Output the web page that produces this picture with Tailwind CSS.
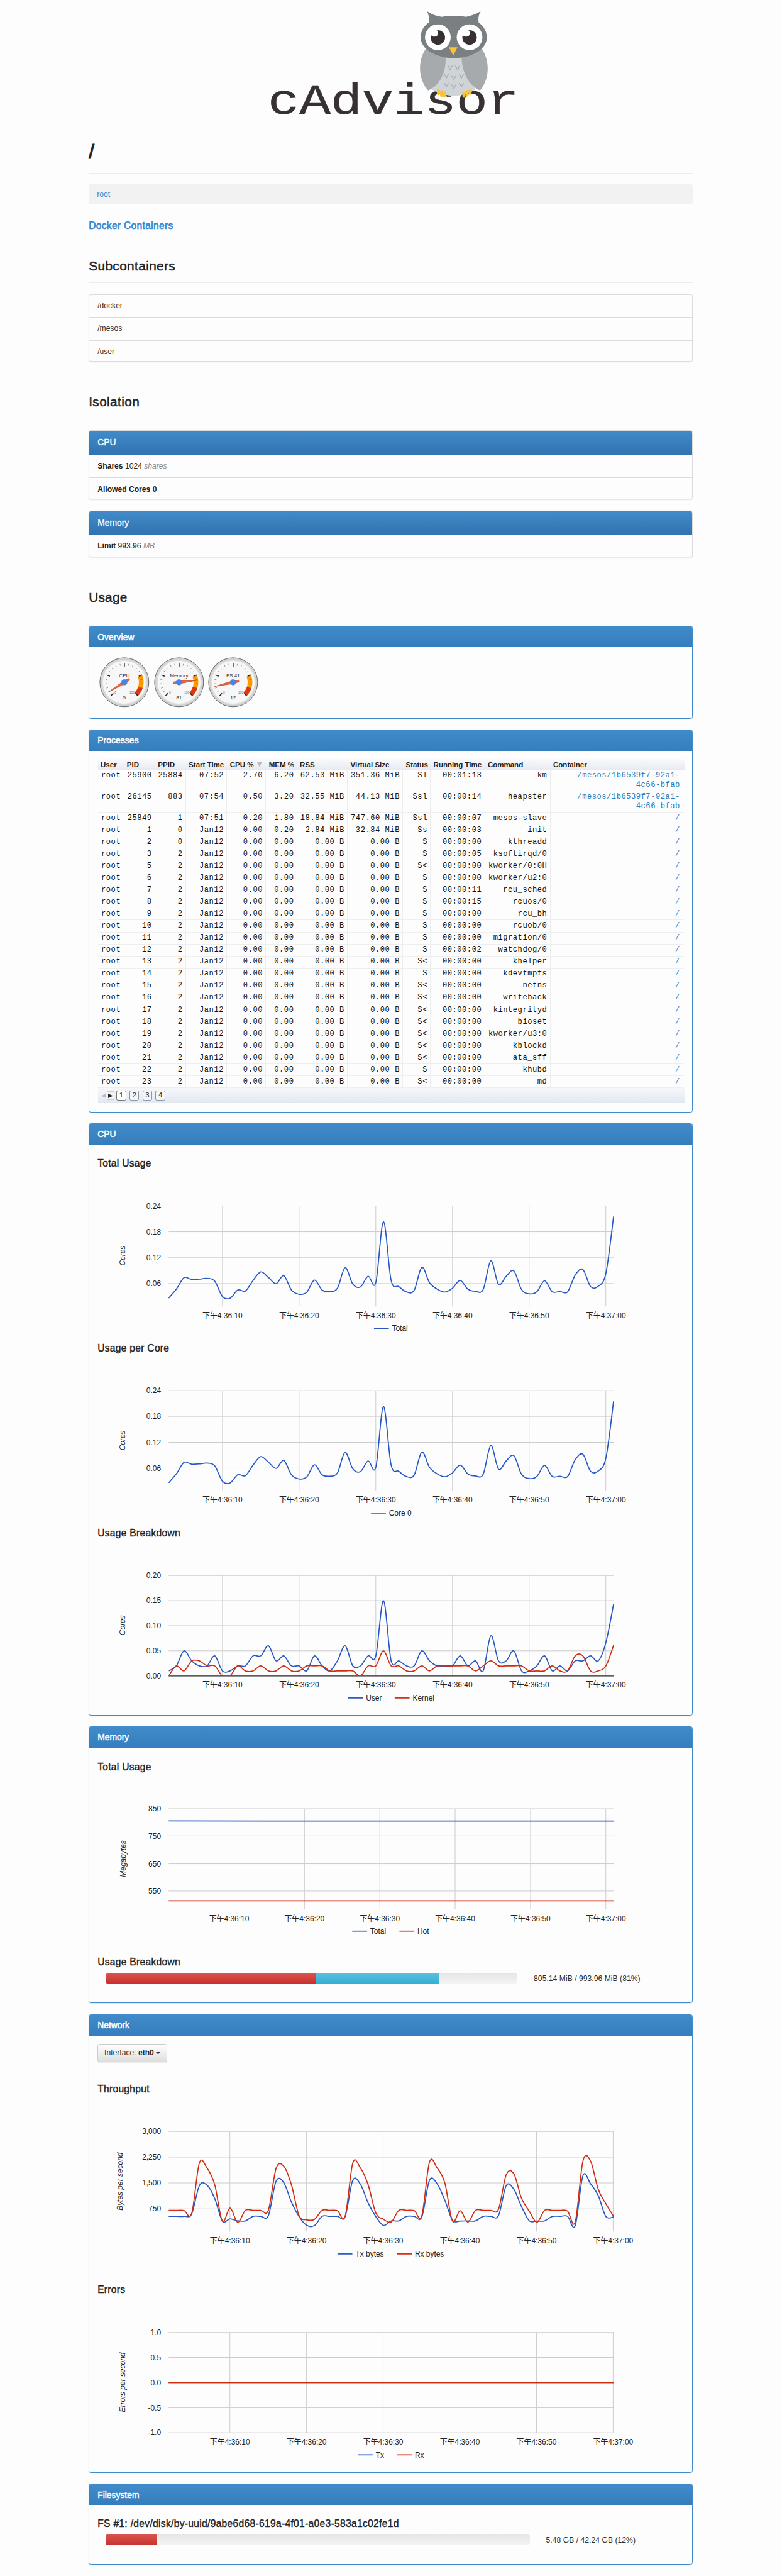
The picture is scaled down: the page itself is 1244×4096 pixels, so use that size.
<!DOCTYPE html>
<html lang="en">
<head>
<meta charset="utf-8">
<title>cAdvisor - /</title>
<script src="https://cdn.jsdelivr.net/npm/@tailwindcss/browser@4"></script>
</head>
<body class="bg-[#fdfdfd] overflow-x-hidden">
<div class="[zoom:0.8663] w-[1436px] h-[4728px] overflow-hidden pl-[163px] text-[14px] text-[#2b2b2b] font-['Liberation_Sans','Noto_Sans_CJK_SC',sans-serif]">
<main class="w-[1109px] flex flex-col">

  <svg class="block w-[1109px] h-[230px] overflow-visible" viewBox="163 0 1109 230">
    <text transform="translate(492.3 209) scale(1 .82)" font-family="Liberation Mono, monospace" font-size="96" fill="#373133" stroke="#373133" stroke-width=".8">cAdvisor</text>
    <g transform="translate(440 0) scale(.35714 .33333)">
      <path fill="#cfd4d7" d="M1052 300H1150C1155 400 1185 460 1215 490C1180 520 1130 527 1102 527C1060 527 1015 512 986 489C1040 450 1055 390 1052 300Z"/>
      <g fill="#a6aaad">
        <path d="M958 268C918 330 915 430 970 498C1030 470 1064 400 1060 310Z"/>
        <path d="M1246 268C1286 330 1290 430 1237 498C1178 470 1143 400 1142 310Z"/>
      </g>
      <path fill="#7a7f82" d="M965 62C985 76 1010 88 1040 93C1080 84 1122 84 1165 93C1192 86 1220 76 1240 62C1230 82 1226 100 1230 124C1258 145 1272 175 1272 208C1272 270 1195 320 1102 320C1010 320 932 270 932 208C932 172 945 145 974 124C976 100 973 82 965 62Z"/>
      <ellipse cx="1020" cy="205" rx="66" ry="71" fill="#fff"/><ellipse cx="1183" cy="205" rx="66" ry="71" fill="#fff"/>
      <ellipse cx="1020" cy="206" rx="37" ry="40" fill="#373133"/><ellipse cx="1183" cy="206" rx="37" ry="40" fill="#373133"/>
      <ellipse cx="1002" cy="182" rx="20" ry="20" fill="#fff"/><ellipse cx="1165" cy="182" rx="20" ry="20" fill="#fff"/>
      <path fill="#fcc22f" d="M1077 261H1121L1099 306Z"/>
      <path fill="none" stroke="#a6aaad" stroke-width="4" d="M1072 362l11 22l11-22M1110 362l11 22l11-22M1053 408l11 22l11-22M1091 418l11 20l11-20M1130 408l11 22l11-22M1053 457l11 20l11-20M1091 466l11 22l11-22M1130 457l11 20l11-20"/>
      <g stroke="#fcc22f" stroke-width="15" stroke-linecap="round">
        <path d="M1023 498v18M1039 504v22M1054 511v18M1154 511v20M1170 503v22M1186 497v18"/>
      </g>
    </g>
  </svg>
  <h1 class="h-[89px] pt-[29.5px] text-[36px] leading-[40px] text-[#222] border-b border-[#ececec] [-webkit-text-stroke:1.4px_#222]">/</h1>
  <nav class="mt-[19.5px] h-[36px] leading-[37px] px-[15px] rounded-[4px] bg-[#f2f2f2] text-[#2f86cf]">root</nav>
  <h4 class="h-[82.5px] leading-[81.5px] text-[18px] tracking-[0.36px] text-[#2f86cf] [-webkit-text-stroke:0.7px_#2f86cf]">Docker Containers</h4>
  <h2 class="h-[63px] leading-[63px] text-[24px] tracking-[0.45px] text-[#222] border-b border-[#ececec] [-webkit-text-stroke:0.6px_#222]">Subcontainers</h2>
  <ul class="mt-[20px] h-[123.5px] flex flex-col border border-[#dcdcdc] rounded-[4px] divide-y divide-[#dcdcdc] shadow-[0_1px_2px_rgba(0,0,0,0.1)]">
    <li class="flex-1 px-[15px] leading-[41px]">/docker</li>
    <li class="flex-1 px-[15px] leading-[41px]">/mesos</li>
    <li class="flex-1 px-[15px] leading-[41px]">/user</li>
  </ul>

  <h2 class="mt-[43px] h-[63px] leading-[63px] text-[24px] tracking-[0.45px] text-[#222] border-b border-[#ececec] [-webkit-text-stroke:0.6px_#222]">Isolation</h2>
  <section class="mt-[20.5px] h-[126.5px] flex flex-col rounded-[4px] border border-[#dcdcdc] overflow-hidden shadow-[0_1px_2px_rgba(0,0,0,0.1)] text-[#222]">
    <h3 class="-m-px mb-0 h-[44px] px-[16px] leading-[45px] text-[16px] text-white bg-linear-to-b from-[#428bca] to-[#3074b0] [-webkit-text-stroke:0.4px_#fff]">CPU</h3>
    <p class="flex-1 px-[15px] leading-[42px] border-b border-[#dcdcdc]"><b>Shares</b> 1024 <i class="text-[#888]">shares</i></p>
    <p class="flex-1 px-[15px] leading-[42px]"><b>Allowed Cores 0</b></p>
  </section>
  <section class="mt-[20.5px] h-[86px] flex flex-col rounded-[4px] border border-[#dcdcdc] overflow-hidden shadow-[0_1px_2px_rgba(0,0,0,0.1)] text-[#222]">
    <h3 class="-m-px mb-0 h-[44px] px-[16px] leading-[45px] text-[16px] text-white bg-linear-to-b from-[#428bca] to-[#3074b0] [-webkit-text-stroke:0.4px_#fff]">Memory</h3>
    <p class="flex-1 px-[15px] leading-[42px]"><b>Limit</b> 993.96 <i class="text-[#888]">MB</i></p>
  </section>

  <h2 class="mt-[42.3px] h-[63px] leading-[63px] text-[24px] tracking-[0.3px] text-[#222] border-b border-[#ececec] [-webkit-text-stroke:0.6px_#222]">Usage</h2>

  <section class="mt-[20.9px] h-[170px] rounded-[4px] border border-[#428bca] overflow-hidden shadow-[0_1px_2px_rgba(0,0,0,0.1)]">
    <h3 class="-m-px mb-0 h-[39px] px-[16px] leading-[41px] text-[16px] tracking-[0.1px] text-white bg-linear-to-b from-[#428bca] to-[#357ebd] [-webkit-text-stroke:0.6px_#fff]">Overview</h3>
    <div id="gauges" class="flex gap-[8px] pt-[18.5px] pl-[18.5px]"></div>
  </section>

  <section class="mt-[20px] h-[703px] rounded-[4px] border border-[#428bca] overflow-hidden shadow-[0_1px_2px_rgba(0,0,0,0.1)]">
    <h3 class="-m-px mb-0 h-[39px] px-[16px] leading-[41px] text-[16px] tracking-[0.1px] text-white bg-linear-to-b from-[#428bca] to-[#357ebd] [-webkit-text-stroke:0.6px_#fff]">Processes</h3>
    <div class="ml-[15.6px] mt-[14.6px] w-[1077px]">
      <div id="thead" class="grid grid-cols-[48.3px_57.1px_56.4px_75.6px_71.6px_57.1px_92.9px_101.6px_50.8px_99.6px_120.2px_244.2px] h-[20.7px] bg-linear-to-b from-[#fafafc] to-[#e6eaf1] text-[13.3px] leading-[21px] font-bold text-[#222] whitespace-nowrap"></div>
      <div id="tbody"></div>
      <div class="h-[27.7px] flex items-center pl-[5px] bg-linear-to-b from-[#f6f7fa] to-[#e3e8f0] text-[13px] text-[#222]">
        <span class="w-[12px] flex justify-center"><svg class="w-[9px] h-[8px]" viewBox="0 0 9 8"><path d="M9 0V8L0 4Z" fill="#bbb"/></svg></span>
        <span class="w-[13px] h-[16px] flex items-center justify-center border border-[#ccc] bg-[#f4f4f4]"><svg class="w-[9px] h-[8px]" viewBox="0 0 9 8"><path d="M0 0V8L9 4Z" fill="#222"/></svg></span>
        <span class="ml-[4px] w-[18px] h-[18px] leading-[16px] text-center rounded-[3px] border border-[#777] bg-white">1</span>
        <span class="ml-[6px] w-[18px] h-[18px] leading-[16px] text-center rounded-[3px] border border-[#8c96a8] bg-[#f3f5f8]">2</span>
        <span class="ml-[6px] w-[18px] h-[18px] leading-[16px] text-center rounded-[3px] border border-[#8c96a8] bg-[#f3f5f8]">3</span>
        <span class="ml-[6px] w-[18px] h-[18px] leading-[16px] text-center rounded-[3px] border border-[#8c96a8] bg-[#f3f5f8]">4</span>
      </div>
    </div>
  </section>

  <section class="mt-[20px] h-[1086.5px] rounded-[4px] border border-[#428bca] overflow-hidden shadow-[0_1px_2px_rgba(0,0,0,0.1)]">
    <h3 class="-m-px mb-0 h-[39px] px-[16px] leading-[41px] text-[16px] text-white bg-linear-to-b from-[#428bca] to-[#357ebd] [-webkit-text-stroke:0.6px_#fff]">CPU</h3>
    <h4 class="mt-[15px] h-[39px] px-[15px] leading-[39px] text-[18px] tracking-[0.34px] text-[#222] [-webkit-text-stroke:0.5px_#222]">Total Usage</h4>
    <svg id="cpu-total" class="block -ml-px w-[1109px] h-[300.3px]" viewBox="163 2155 1109 300.3"></svg>
    <h4 class="h-[39px] px-[15px] leading-[39px] text-[18px] tracking-[0.34px] text-[#222] [-webkit-text-stroke:0.5px_#222]">Usage per Core</h4>
    <svg id="cpu-core" class="block -ml-px w-[1109px] h-[300px]" viewBox="163 2494.3 1109 300"></svg>
    <h4 class="h-[39px] px-[15px] leading-[39px] text-[18px] tracking-[0.34px] text-[#222] [-webkit-text-stroke:0.5px_#222]">Usage Breakdown</h4>
    <svg id="cpu-split" class="block -ml-px w-[1109px] h-[310px]" viewBox="163 2833.3 1109 310"></svg>
  </section>

  <section class="mt-[20.5px] h-[508px] rounded-[4px] border border-[#428bca] overflow-hidden shadow-[0_1px_2px_rgba(0,0,0,0.1)]">
    <h3 class="-m-px mb-0 h-[39px] px-[16px] leading-[41px] text-[16px] text-white bg-linear-to-b from-[#428bca] to-[#357ebd] [-webkit-text-stroke:0.6px_#fff]">Memory</h3>
    <h4 class="mt-[15.5px] h-[39px] px-[15px] leading-[39px] text-[18px] tracking-[0.34px] text-[#222] [-webkit-text-stroke:0.5px_#222]">Total Usage</h4>
    <svg id="mem-total" class="block -ml-px w-[1109px] h-[319.7px]" viewBox="163 3262.5 1109 319.7"></svg>
    <h4 class="h-[39px] px-[15px] leading-[39px] text-[18px] tracking-[0.34px] text-[#222] [-webkit-text-stroke:0.5px_#222]">Usage Breakdown</h4>
    <div class="flex items-center h-[20px] pl-[30px]">
      <div class="w-[756px] h-[20px] flex rounded-[4px] overflow-hidden bg-linear-to-b from-[#e6e6e6] to-[#f4f4f4]">
        <div class="w-[386.3px] bg-linear-to-b from-[#d9534f] to-[#c9302c]"></div>
        <div class="w-[225.5px] bg-linear-to-b from-[#5bc0de] to-[#31b0d5]"></div>
      </div>
      <span class="pl-[30px] tracking-[0.05px]">805.14 MiB / 993.96 MiB (81%)</span>
    </div>
  </section>

  <section class="mt-[20px] h-[841.5px] rounded-[4px] border border-[#428bca] overflow-hidden shadow-[0_1px_2px_rgba(0,0,0,0.1)]">
    <h3 class="-m-px mb-0 h-[39px] px-[16px] leading-[41px] text-[16px] text-white bg-linear-to-b from-[#428bca] to-[#357ebd] [-webkit-text-stroke:0.6px_#fff]">Network</h3>
    <button class="mt-[15px] ml-[15px] w-[128px] h-[34px] flex items-center justify-center gap-[4px] rounded-[4px] border border-[#ccc] bg-linear-to-b from-white to-[#dedede] shadow-[0_1px_1px_rgba(0,0,0,0.08)]"><span>Interface: <b>eth0</b></span><svg class="w-[8px] h-[4px]" viewBox="0 0 8 4"><path d="M0 0H8L4 4Z" fill="#333"/></svg></button>
    <h4 class="mt-[30.3px] h-[39px] px-[15px] leading-[39px] text-[18px] tracking-[0.34px] text-[#222] [-webkit-text-stroke:0.5px_#222]">Throughput</h4>
    <svg id="net-rate" class="block -ml-px w-[1109px] h-[329.5px]" viewBox="163 3854.3 1109 329.5"></svg>
    <h4 class="h-[39px] px-[15px] leading-[39px] text-[18px] tracking-[0.34px] text-[#222] [-webkit-text-stroke:0.5px_#222]">Errors</h4>
    <svg id="net-err" class="block -ml-px w-[1109px] h-[310px]" viewBox="163 4222.8 1109 310"></svg>
  </section>

  <section class="mt-[20.5px] h-[148.5px] rounded-[4px] border border-[#428bca] overflow-hidden shadow-[0_1px_2px_rgba(0,0,0,0.1)]">
    <h3 class="-m-px mb-0 h-[39px] px-[16px] leading-[41px] text-[16px] text-white bg-linear-to-b from-[#428bca] to-[#357ebd] [-webkit-text-stroke:0.6px_#fff]">Filesystem</h3>
    <h4 class="mt-[15px] h-[39px] px-[15px] leading-[39px] text-[18px] tracking-[0.37px] text-[#222] whitespace-nowrap [-webkit-text-stroke:0.5px_#222]">FS #1: /dev/disk/by-uuid/9abe6d68-619a-4f01-a0e3-583a1c02fe1d</h4>
    <div class="flex items-center h-[20px] pl-[30px]">
      <div class="w-[779px] h-[20px] flex rounded-[4px] overflow-hidden bg-linear-to-b from-[#e6e6e6] to-[#f4f4f4]">
        <div class="w-[93px] bg-linear-to-b from-[#d9534f] to-[#c9302c]"></div>
      </div>
      <span class="pl-[29.5px] tracking-[0.05px]">5.48 GB / 42.24 GB (12%)</span>
    </div>
  </section>
</main>
</div>

<script>
// ---- process table ----
const heads = ['User','PID','PPID','Start Time','CPU %','MEM %','RSS','Virtual Size','Status','Running Time','Command','Container'];
document.getElementById('thead').innerHTML = heads.map(h => h === 'CPU %'
  ? `<span class="pl-[5px] flex items-center gap-[6px]">${h}<svg class="w-[9px] h-[9px]" viewBox="0 0 9 9"><path d="M0 0H9L4.5 9Z" fill="#bbb"/></svg></span>`
  : `<span class="pl-[5px]">${h}</span>`).join('');

const mesos = '/mesos/1b6539f7-92a1-<br>4c66-bfab';
const rows = [
  [25900,25884,'07:52','2.70','6.20','62.53 MiB','351.36 MiB','Sl','00:01:13','km',mesos],
  [26145,883,'07:54','0.50','3.20','32.55 MiB','44.13 MiB','Ssl','00:00:14','heapster',mesos],
  [25849,1,'07:51','0.20','1.80','18.84 MiB','747.60 MiB','Ssl','00:00:07','mesos-slave','/'],
  [1,0,'Jan12','0.00','0.20','2.84 MiB','32.84 MiB','Ss','00:00:03','init','/']
];
[[2,'S','00','kthreadd'],[3,'S','05','ksoftirqd/0'],[5,'S&lt;','00','kworker/0:0H'],[6,'S','00','kworker/u2:0'],[7,'S','11','rcu_sched'],
 [8,'S','15','rcuos/0'],[9,'S','00','rcu_bh'],[10,'S','00','rcuob/0'],[11,'S','00','migration/0'],[12,'S','02','watchdog/0'],
 [13,'S&lt;','00','khelper'],[14,'S','00','kdevtmpfs'],[15,'S&lt;','00','netns'],[16,'S&lt;','00','writeback'],[17,'S&lt;','00','kintegrityd'],
 [18,'S&lt;','00','bioset'],[19,'S&lt;','00','kworker/u3:0'],[20,'S&lt;','00','kblockd'],[21,'S&lt;','00','ata_sff'],[22,'S','00','khubd'],[23,'S&lt;','00','md']
].forEach(([pid,st,sec,cmd]) => rows.push([pid, pid === 2 ? 0 : 2, 'Jan12','0.00','0.00','0.00 B','0.00 B',st,'00:00:'+sec,cmd,'/']));
document.getElementById('tbody').innerHTML = rows.map((r, i) =>
  `<div class="${i < 2 ? 'h-[39px]' : 'h-[22px]'} w-[1075.4px] grid grid-cols-[48.3px_57.1px_56.4px_75.6px_71.6px_57.1px_92.9px_101.6px_50.8px_99.6px_120.2px_244.2px] border-b border-[#eee] text-right text-[14px] leading-[17.3px] tracking-[0.6px] text-[#111] whitespace-nowrap font-['Liberation_Mono',monospace]">` +
  ['root', ...r].map((c, k) => `<span class="pt-[2px] pr-[5px] border-r border-[#eee] ${k === 11 ? 'text-[#2a7cc4]' : ''}">${c}</span>`).join('') + '</div>').join('');

// ---- gauges ----
const pol = (r, v) => { const a = (135 + v * 2.7) * Math.PI / 180; return (r * Math.cos(a)).toFixed(1) + ' ' + (r * Math.sin(a)).toFixed(1); };
const band = (a, b, c) => `<path fill="${c}" d="M${pol(106, a)}A106 106 0 0 1 ${pol(106, b)}L${pol(80, b)}A80 80 0 0 0 ${pol(80, a)}Z"/>`;
const gauge = (name, v) => {
  let s = `<circle r="135" fill="#d0d0d0" stroke="#555" stroke-width="3"/><circle r="125" fill="#dedede"/><circle r="118" fill="#f7f7f7"/>` + band(75, 90, '#ff9900') + band(90, 100, '#dc3912');
  for (let t = 0; t <= 100; t += 5) s += t % 25 ? `<path d="M${pol(104, t)}L${pol(94, t)}" stroke="#666" stroke-width="2.5"/>` : `<path d="M${pol(106, t)}L${pol(86, t)}" stroke="#222" stroke-width="5.5"/>`;
  s += `<text y="-27" text-anchor="middle" font-size="28" fill="#333">${name}</text><text y="93" text-anchor="middle" font-size="28" fill="#333">${v}</text>` +
    `<text x="-50" y="63" text-anchor="middle" font-size="17" fill="#777">0</text><text x="42" y="63" text-anchor="middle" font-size="17" fill="#777">100</text>`;
  s += `<g transform="rotate(${135 + v * 2.7})"><path d="M105 0L0 8L-32 5V-5L0 -8Z" fill="#dc3912" fill-opacity=".75" stroke="#c63310" stroke-width="2"/></g><circle r="16" fill="#4684ee" stroke="#3a6fc8" stroke-width="1"/>`;
  return `<svg class="w-[92px] h-[92px]" viewBox="-138 -138 276 276">${s}</svg>`;
};
document.getElementById('gauges').innerHTML = gauge('CPU', 5) + gauge('Memory', 81) + gauge('FS #1', 12);

// ---- line charts ----
const L = 310, R = 1127, BLUE = '#2558c4', RED = '#d22c10';
const curve = pts => {
  let d = `M${pts[0][0]} ${pts[0][1]}`;
  for (let i = 0; i < pts.length - 1; i++) {
    const a = pts[i - 1] || pts[i], b = pts[i], c = pts[i + 1], e = pts[i + 2] || c;
    d += `C${[b[0] + (c[0] - a[0]) / 6, b[1] + (c[1] - a[1]) / 6, c[0] - (e[0] - b[0]) / 6, c[1] - (e[1] - b[1]) / 6, c[0], c[1]].map(n => n.toFixed(2)).join(' ')}`;
  }
  return d;
};
function chart(id, o) {
  let s = `<g font-size="13.8" fill="#222">`;
  o.ys.forEach(([y, t]) => s += `<path d="M${L} ${y}H${R}" stroke="#ccc" stroke-width="1.15"/><text x="295.8" y="${y + 4.8}" text-anchor="end">${t}</text>`);
  ['36:10','36:20','36:30','36:40','36:50','37:00'].forEach((t, i) => {
    const x = o.x0 + i * o.dx;
    s += `<path d="M${x} ${o.ys[0][0]}V${o.bottom}" stroke="#ccc" stroke-width="1.15"/><text x="${x}" y="${o.label}" text-anchor="middle">下午4:${t}</text>`;
  });
  if (o.axis) s += `<path d="M${L} ${o.axis}H${R}" stroke="#333" stroke-width="1.3"/>`;
  s += `<text transform="translate(${o.tx} ${o.ty}) rotate(-90)" text-anchor="middle" font-style="italic">${o.title}</text>`;
  o.legend.forEach(([x, t, c]) => s += `<path d="M${x} ${o.legendY}h27.3" stroke="${c}" stroke-width="2"/><text x="${x + 33}" y="${o.legendY + 4.9}">${t}</text>`);
  s += `</g><clipPath id="${id}-clip"><rect x="${L}" y="${o.ys[0][0]}" width="${R - L + 1}" height="${o.bottom - o.ys[0][0]}"/></clipPath><g fill="none" stroke-width="2"${o.axis ? ` clip-path="url(#${id}-clip)"` : ''}>`;
  o.series.forEach(([c, v]) => s += `<path stroke="${c}" d="${curve(v.map((y, i) => [L + i * (R - L) / (v.length - 1), o.map(y)]))}"/>`);
  document.getElementById(id).innerHTML = s + '</g>';
}
const total = [997,948,885,895,893,889,904,988,998,953,958,900,853,884,918,874,953,976,965,898,953,961,943,830,920,936,877,912,577,900,934,963,955,828,912,948,964,943,900,948,960,950,792,922,877,848,950,974,962,902,962,961,963,870,840,934,932,860,548];
const user = [1,2,5,3,2,2,4,1,1,2,2,4,4,6,3,4,2,2,1,4,2,1,3,6,2,2,4,4,15,3,3,2,2,5,3,2,2,2,4,2,3,1,8,3,3,5,1,1,2,4,1,2,1,3,3,4,3,6.7,14.3];
const kernel = [0,2,1,3,3,2,2,0,0,2,1,1,2,1,1,2,1,1,2,2,2,1,1,1,1,0,2,2,5,2,2,1,1,2,1,2,2,2,2,2,1,2,3,2,2,2,2,1,1,1,2,1,1,4,4,1,1,2,6.1];
const tx = [1134,1134,1134,1120,965,962,1035,1160,1148,1159,1159,1134,1134,1130,940,948,1055,1135,1184,1185,1134,1134,1134,1135,935,958,1060,1135,1184,1159,1159,1134,1134,1138,935,955,1045,1155,1160,1159,1159,1134,1134,1130,965,985,1080,1158,1160,1159,1135,1134,1134,1185,910,955,1020,1135,1137];
const rx = [1101,1101,1102,1118,840,868,960,1160,1088,1167,1101,1101,1101,1100,870,858,960,1130,1153,1151,1101,1101,1103,1135,840,868,960,1115,1150,1166,1101,1101,1102,1130,835,868,950,1160,1103,1166,1101,1101,1101,1095,905,900,1035,1105,1167,1101,1101,1101,1105,1165,830,830,985,1065,1134];

chart('cpu-total', {ys:[[2213.3,'0.24'],[2260.7,'0.18'],[2308.3,'0.12'],[2355.7,'0.06']], x0:408.7, dx:140.8, bottom:2397.7, label:2419, tx:230, ty:2304.7, title:'Cores', legendY:2438, legend:[[687,'Total',BLUE]], map:v=>2050+v/3, series:[[BLUE,total]]});
chart('cpu-core', {ys:[[2552.3,'0.24'],[2599.5,'0.18'],[2647.3,'0.12'],[2694.5,'0.06']], x0:408.7, dx:140.8, bottom:2736.3, label:2758, tx:230, ty:2643.7, title:'Cores', legendY:2777, legend:[[681.5,'Core 0',BLUE]], map:v=>2389+v/3, series:[[BLUE,total]]});
chart('cpu-split', {ys:[[2891.3,'0.20'],[2937.3,'0.15'],[2983.3,'0.10'],[3029.3,'0.05'],[3075.5,'0.00']], x0:408.7, dx:140.8, bottom:3075.7, label:3097, tx:230, ty:2982.5, title:'Cores', axis:3075.5, legendY:3116, legend:[[639.3,'User',BLUE],[725,'Kernel',RED]], map:v=>3075.5-v*9.21, series:[[BLUE,user],[RED,kernel]]});
chart('mem-total', {ys:[[3320.2,'850'],[3370.3,'750'],[3421.3,'650'],[3471.3,'550']], x0:421, dx:138.35, bottom:3504.8, label:3526.5, tx:231.5, ty:3411.9, title:'Megabytes', legendY:3545, legend:[[647,'Total',BLUE],[733.7,'Hot',RED]], map:v=>v, series:[[BLUE,[3342.6,3342.9,3342.9,3342.9]],[RED,[3489.3,3489.3]]]});
chart('net-rate', {ys:[[3912.3,'3,000'],[3959.3,'2,250'],[4006.7,'1,500'],[4054.3,'750']], x0:422.4, dx:140.75, bottom:4096, label:4118, tx:225.7, ty:4004, title:'Bytes per second', legendY:4137, legend:[[620,'Tx bytes',BLUE],[729,'Rx bytes',RED]], map:v=>3690+v/3, series:[[BLUE,tx],[RED,rx]]});
chart('net-err', {ys:[[4281.4,'1.0'],[4327.3,'0.5'],[4373.4,'0.0'],[4419.5,'-0.5'],[4465.4,'-1.0']], x0:422.4, dx:140.75, bottom:4465.4, label:4487.4, tx:230, ty:4372.9, title:'Errors per second', legendY:4506, legend:[[657.3,'Tx',BLUE],[729,'Rx',RED]], map:v=>v, series:[[BLUE,[4373.4,4373.4]],[RED,[4373.4,4373.4]]]});
</script>
</body>
</html>
